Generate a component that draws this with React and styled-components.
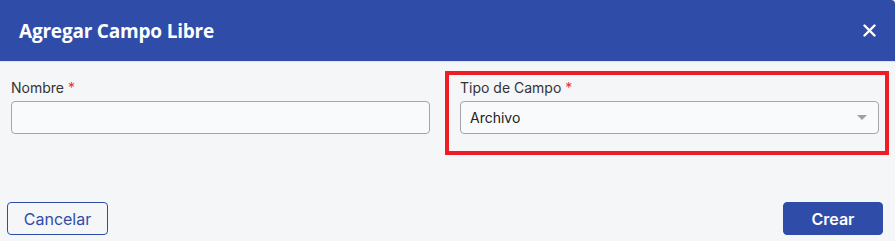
import React from "react";
import styled, { createGlobalStyle } from "styled-components";

const GlobalStyle = createGlobalStyle`
  html, body {
    margin: 0;
    padding: 0;
    background: #f5f6f8;
  }
  * {
    box-sizing: border-box;
  }
`;

const Modal = styled.div`
  width: 895px;
  height: 241px;
  background: #f5f6f8;
  display: flex;
  flex-direction: column;
  overflow: hidden;
  border-top-right-radius: 4px;
`;

const Header = styled.div`
  height: 62px;
  flex-shrink: 0;
  background: #2f4da8;
  border-bottom: 1px solid #dfe4ef;
  display: flex;
  align-items: center;
  justify-content: space-between;
  padding: 0 18px 0 19px;
`;

const Title = styled.h2`
  margin: 0;
  font-family: "Open Sans", sans-serif;
  font-weight: 700;
  font-size: 19px;
  color: #ffffff;
  letter-spacing: -0.2px;
`;

const CloseButton = styled.button`
  border: none;
  background: none;
  padding: 0;
  width: 16px;
  height: 16px;
  display: flex;
  align-items: center;
  justify-content: center;
  cursor: pointer;
`;

const Body = styled.div`
  display: grid;
  grid-template-columns: 419px 419px;
  column-gap: 30px;
  align-items: start;
  padding: 9px 0 0 11px;
  flex: 1;
`;

const Field = styled.div`
  display: flex;
  flex-direction: column;
  gap: 3px;
  padding-top: 4px;
  ${(p) =>
    p.$highlight &&
    `
    border: 4px solid #ee1c25;
    margin: 0 -10px 0 -15px;
    padding: 0 6px 17px 11px;
  `}
`;

const Label = styled.label`
  font-family: Inter, sans-serif;
  font-size: 14px;
  color: #333333;
  line-height: 20px;
  padding-top: 3px;
`;

const Required = styled.span`
  color: #e5323c;
  margin-left: 4px;
`;

const TextInput = styled.input`
  height: 33px;
  width: 100%;
  border: 1px solid #a3a6ab;
  border-radius: 4px;
  background: #f9fafb;
  font-family: Inter, sans-serif;
  font-size: 14px;
  padding: 0 9px;
  outline: none;
`;

const SelectBox = styled.div`
  height: 33px;
  width: 100%;
  border: 1px solid #a3a6ab;
  border-radius: 4px;
  background: #f9fafb;
  display: flex;
  align-items: center;
  justify-content: space-between;
  padding: 0 11px 0 9px;
  font-family: Inter, sans-serif;
  font-size: 14px;
  color: #222222;
`;

const Caret = styled.span`
  width: 0;
  height: 0;
  border-left: 5px solid transparent;
  border-right: 5px solid transparent;
  border-top: 5px solid #a0a0a0;
`;

const Footer = styled.div`
  display: flex;
  justify-content: space-between;
  padding: 0 12px 6px 7px;
`;

const Button = styled.button`
  height: 33px;
  border-radius: 4px;
  font-family: Inter, sans-serif;
  font-size: 16px;
  cursor: pointer;
  border: 1px solid #2f4da8;
  background: ${(p) => (p.$primary ? "#2f4da8" : "transparent")};
  color: ${(p) => (p.$primary ? "#ffffff" : "#2f4da8")};
  font-weight: ${(p) => (p.$primary ? 600 : 400)};
  width: ${(p) => (p.$primary ? "100px" : "101px")};
`;

export default function App() {
  return (
    <>
      <GlobalStyle />
      <Modal>
        <Header>
          <Title>Agregar Campo Libre</Title>
          <CloseButton aria-label="Cerrar">
            <svg width="13" height="13" viewBox="0 0 13 13">
              <path
                d="M1.5 1.5 L11.5 11.5 M11.5 1.5 L1.5 11.5"
                stroke="#ffffff"
                strokeWidth="2.4"
                strokeLinecap="round"
              />
            </svg>
          </CloseButton>
        </Header>
        <Body>
          <Field>
            <Label>
              Nombre<Required>*</Required>
            </Label>
            <TextInput type="text" />
          </Field>
          <Field $highlight>
            <Label>
              Tipo de Campo<Required>*</Required>
            </Label>
            <SelectBox>
              <span>Archivo</span>
              <Caret />
            </SelectBox>
          </Field>
        </Body>
        <Footer>
          <Button>Cancelar</Button>
          <Button $primary>Crear</Button>
        </Footer>
      </Modal>
    </>
  );
}
